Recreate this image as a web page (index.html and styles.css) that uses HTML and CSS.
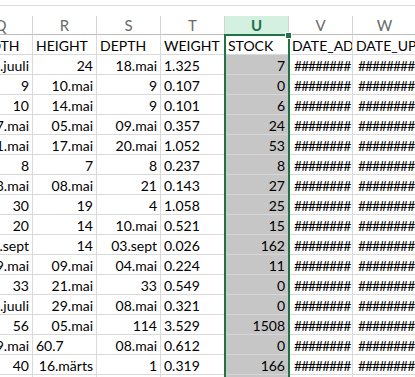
FILE: index.html
```html
<!DOCTYPE html>
<html>
<head>
<meta charset="utf-8">
<link rel="stylesheet" href="styles.css">
</head>
<body>
<div class="formula"></div>
<div class="sheet">
  <div class="ch">Q</div><div class="ch">R</div><div class="ch">S</div><div class="ch">T</div><div class="ch cur">U</div><div class="ch">V</div><div class="ch">W</div>

  <div class="c l">WIDTH</div><div class="c l">HEIGHT</div><div class="c l">DEPTH</div><div class="c l">WEIGHT</div><div class="c l act">STOCK</div><div class="c l">DATE_ADDED</div><div class="c l">DATE_UPDATED</div>

  <div class="c r">01.juuli</div><div class="c r">24</div><div class="c r">18.mai</div><div class="c l">1.325</div><div class="c r sel">7</div><div class="c h">########</div><div class="c h">########</div>
  <div class="c r">9</div><div class="c r">10.mai</div><div class="c r">9</div><div class="c l">0.107</div><div class="c r sel">0</div><div class="c h">########</div><div class="c h">########</div>
  <div class="c r">10</div><div class="c r">14.mai</div><div class="c r">9</div><div class="c l">0.101</div><div class="c r sel">6</div><div class="c h">########</div><div class="c h">########</div>
  <div class="c r">17.mai</div><div class="c r">05.mai</div><div class="c r">09.mai</div><div class="c l">0.357</div><div class="c r sel">24</div><div class="c h">########</div><div class="c h">########</div>
  <div class="c r">11.mai</div><div class="c r">17.mai</div><div class="c r">20.mai</div><div class="c l">1.052</div><div class="c r sel">53</div><div class="c h">########</div><div class="c h">########</div>
  <div class="c r">8</div><div class="c r">7</div><div class="c r">8</div><div class="c l">0.237</div><div class="c r sel">8</div><div class="c h">########</div><div class="c h">########</div>
  <div class="c r">13.mai</div><div class="c r">08.mai</div><div class="c r">21</div><div class="c l">0.143</div><div class="c r sel">27</div><div class="c h">########</div><div class="c h">########</div>
  <div class="c r">30</div><div class="c r">19</div><div class="c r">4</div><div class="c l">1.058</div><div class="c r sel">25</div><div class="c h">########</div><div class="c h">########</div>
  <div class="c r">20</div><div class="c r">14</div><div class="c r">10.mai</div><div class="c l">0.521</div><div class="c r sel">15</div><div class="c h">########</div><div class="c h">########</div>
  <div class="c r">01.sept</div><div class="c r">14</div><div class="c r">03.sept</div><div class="c l">0.026</div><div class="c r sel">162</div><div class="c h">########</div><div class="c h">########</div>
  <div class="c r">19.mai</div><div class="c r">09.mai</div><div class="c r">04.mai</div><div class="c l">0.224</div><div class="c r sel">11</div><div class="c h">########</div><div class="c h">########</div>
  <div class="c r">33</div><div class="c r">21.mai</div><div class="c r">33</div><div class="c l">0.549</div><div class="c r sel">0</div><div class="c h">########</div><div class="c h">########</div>
  <div class="c r">01.juuli</div><div class="c r">29.mai</div><div class="c r">08.mai</div><div class="c l">0.321</div><div class="c r sel">0</div><div class="c h">########</div><div class="c h">########</div>
  <div class="c r">56</div><div class="c r">05.mai</div><div class="c r">114</div><div class="c l">3.529</div><div class="c r sel">1508</div><div class="c h">########</div><div class="c h">########</div>
  <div class="c r">19.mai</div><div class="c l">60.7</div><div class="c r">08.mai</div><div class="c l">0.612</div><div class="c r sel">0</div><div class="c h">########</div><div class="c h">########</div>
  <div class="c r">40</div><div class="c r">16.märts</div><div class="c r">1</div><div class="c l">0.319</div><div class="c r sel">166</div><div class="c h">########</div><div class="c h">########</div>
  <div class="c r"></div><div class="c r"></div><div class="c r"></div><div class="c l"></div><div class="c r sel"></div><div class="c h"></div><div class="c h"></div>

  <div class="selbox"><div class="handle"></div></div>
</div>
</body>
</html>
```

FILE: styles.css
```css
html, body {
  margin: 0;
  padding: 0;
  background: #fff;
  overflow: hidden;
}
body {
  width: 415px;
  height: 377px;
  font-family: Lato, "Liberation Sans", sans-serif;
  font-size: 14px;
  color: #000;
}
.formula {
  height: 5px;
  border-bottom: 1px solid #d9d9d9;
  margin-bottom: 10px;
}
.sheet {
  position: relative;
  display: grid;
  grid-template-columns: repeat(7, 64px);
  grid-auto-rows: 20px;
  grid-template-rows: 19px;
  margin-left: -31px;
  width: 448px;
}
.ch {
  box-sizing: border-box;
  border-right: 1px solid #d4d4d4;
  border-bottom: 1px solid #bdbdbd;
  text-align: center;
  color: #6a6a6a;
  font-size: 15px;
  line-height: 18px;
}
.ch.cur {
  background: #d3f0e0;
  color: #217346;
  font-weight: bold;
}
.c {
  box-sizing: border-box;
  border-right: 1px solid #d9d9d9;
  border-bottom: 1px solid #d9d9d9;
  padding: 0 3px;
  line-height: 21px;
  white-space: nowrap;
  overflow: hidden;
}
.l { text-align: left; }
.r { text-align: right; }
.h {
  text-align: left;
  padding-left: 5px;
  letter-spacing: -1.1px;
}
.sel {
  background: #c6c6c6;
  border-bottom-color: #d6d6d6;
}
.act { background: #fff; }
.selbox {
  position: absolute;
  left: 255px;
  top: 18px;
  width: 66px;
  height: 400px;
  box-sizing: border-box;
  border: 2px solid #217346;
}
.handle {
  position: absolute;
  right: -4px;
  top: -4px;
  width: 5px;
  height: 5px;
  background: #217346;
  border: 1px solid #fff;
}
```
